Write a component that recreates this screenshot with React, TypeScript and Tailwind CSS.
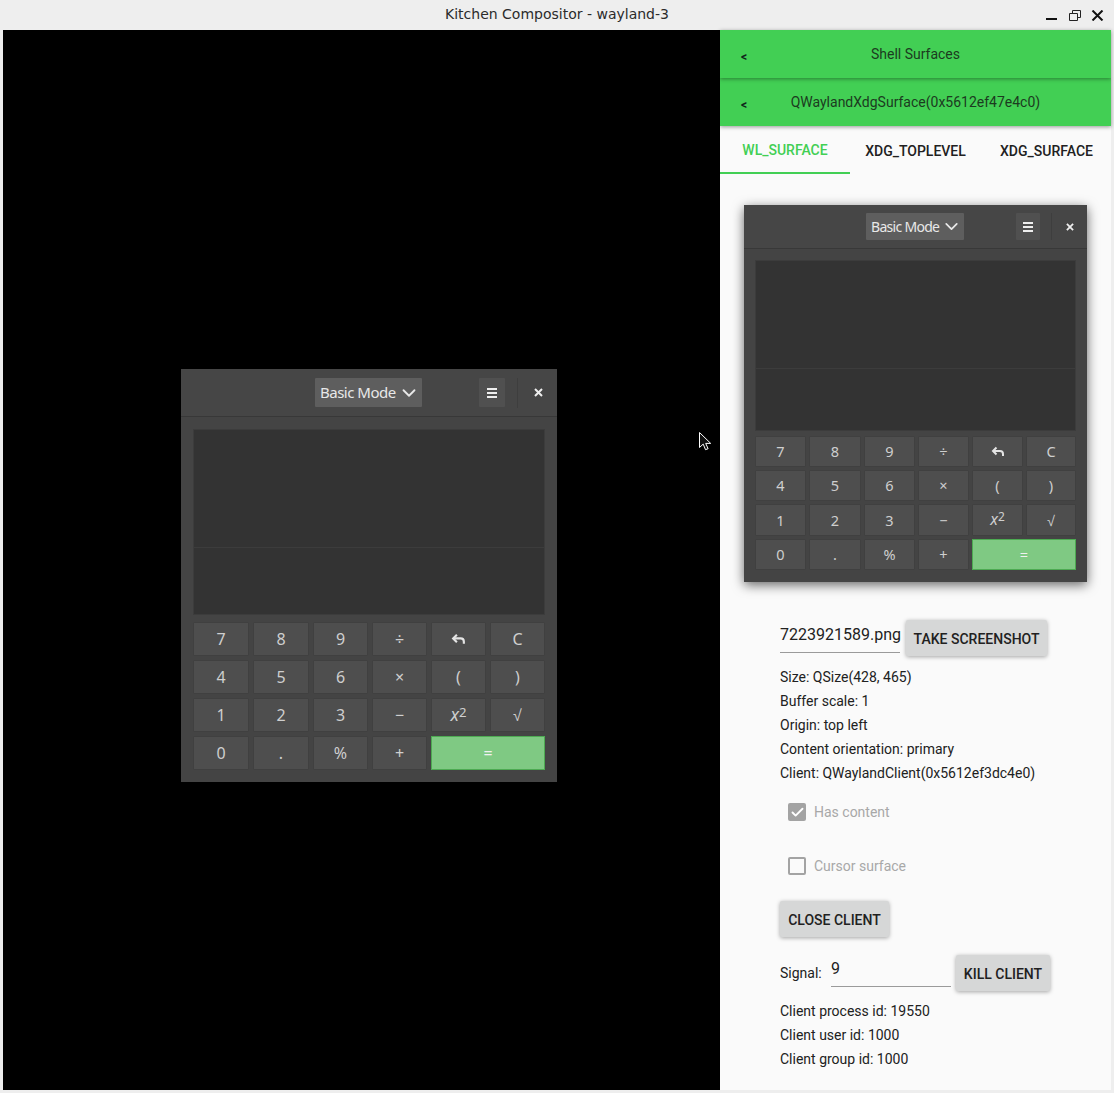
import type { ReactNode } from "react";
import { Check, ChevronDown } from "lucide-react";

type Size = {
  win: string; header: string; mode: string; modeText: string; menu: string; sep: string; close: string; closeIcon: number;
  body: string; display: string; top: string; grid: string; eq: string; chev: number; back: number;
};

const big: Size = {
  win: "w-[376px] h-[413px] rounded-t-[3px]",
  header: "h-[48px] pt-[9px] pl-[134px]",
  mode: "w-[107px] h-[29px] pl-[5px] gap-[2px]",
  modeText: "text-[15px] tracking-[-0.5px]",
  menu: "w-[26px] h-[29px] ml-[57px]",
  sep: "h-[30px] ml-[12px]",
  close: "ml-[16px] h-[29px]",
  closeIcon: 9,
  body: "pt-[12px] pl-[12px] pr-[12px]",
  display: "h-[186px]",
  top: "h-[118px]",
  grid: "mt-[7px] grid-cols-[56px_56px_55px_55px_55px_55px] grid-rows-[34px_34px_34px_34px] gap-[4px] text-[16px]",
  eq: "col-span-2",
  chev: 22,
  back: 15,
};

const small: Size = {
  win: "w-[343px] h-[377px] rounded-t-[2px] shadow-[0_3px_12px_rgba(0,0,0,0.6)]",
  header: "h-[44px] pt-[8px] pl-[122px]",
  mode: "w-[98px] h-[27px] pl-[5px] gap-[2px]",
  modeText: "text-[14px] tracking-[-0.7px]",
  menu: "w-[24px] h-[27px] ml-[52px]",
  sep: "h-[27px] ml-[11px]",
  close: "ml-[14px] h-[27px]",
  closeIcon: 8,
  body: "pt-[11px] pl-[11px] pr-[11px]",
  display: "h-[171px]",
  top: "h-[108px]",
  grid: "mt-[5px] grid-cols-[51px_52px_51px_51px_51px_50px] grid-rows-[31px_31px_32px_31px] gap-[3px] text-[14.5px]",
  eq: "col-span-2",
  chev: 21,
  back: 14,
};

function BackIcon({ size }: { size: number }) {
  return (
    <svg width={size} height={size} viewBox="0 0 14 14" fill="none" stroke="#e4e4e4" strokeWidth="2">
      <path d="M5.5 2.5 2 6l3.5 3.5" />
      <path d="M2.5 6H9c2 0 3 1.3 3 3v2" />
    </svg>
  );
}

function Calc({ s }: { s: Size }) {
  const keys: ReactNode[] = [
    "7", "8", "9", "÷", <BackIcon size={s.back} />, "C",
    "4", "5", "6", "×", "(", ")",
    "1", "2", "3", "−",
    <span className="italic text-[1.1em] leading-none">x<span className="not-italic text-[0.75em] leading-none relative -top-[0.35em]">2</span></span>,
    "√",
    "0", ".", "%", "+",
  ];
  return (
    <div className={`${s.win} bg-[#444444] shrink-0 font-['Noto_Sans',sans-serif] text-[#cfcfcf]`}>
      <div className={`${s.header} flex items-start border-b border-[#383838] bg-[#464646]`}>
        <div className={`${s.mode} bg-[#5e5e5e] rounded-[1px] flex items-center text-[#e8e8e8]`}>
          <span className={`${s.modeText} leading-none whitespace-nowrap`}>Basic Mode</span>
          <ChevronDown size={s.chev} strokeWidth={2} color="#e8e8e8" />
        </div>
        <div className={`${s.menu} bg-[#505050] rounded-[1px] flex flex-col items-center justify-center gap-[2px]`}>
          <div className="w-[10px] h-[2px] bg-[#eeeeee]" />
          <div className="w-[10px] h-[2px] bg-[#eeeeee]" />
          <div className="w-[10px] h-[2px] bg-[#eeeeee]" />
        </div>
        <div className={`${s.sep} w-px bg-[#3e3e3e]`} />
        <div className={`${s.close} flex items-center`}>
          <svg width={s.closeIcon} height={s.closeIcon} viewBox="0 0 9 9" stroke="#eeeeee" strokeWidth="2">
            <path d="M1 1l7 7M8 1 1 8" />
          </svg>
        </div>
      </div>
      <div className={s.body}>
        <div className={`${s.display} bg-[#333333] border border-[#3c3c3c] flex flex-col`}>
          <div className={`${s.top} border-b border-[#3c3c3c]`} />
        </div>
        <div className={`${s.grid} grid`}>
          {keys.map((k, i) => (
            <div key={i} className="bg-[#4e4e4e] border border-[#404040] rounded-[1px] flex items-center justify-center leading-none">
              {k}
            </div>
          ))}
          <div className={`${s.eq} bg-[#7fc983] border border-[#4daa52] flex items-center justify-center text-[#f0f0f0] leading-none`}>=</div>
        </div>
      </div>
    </div>
  );
}

function RaisedButton({ children, className }: { children: string; className: string }) {
  return (
    <div className={`${className} bg-[#d6d7d7] rounded-[2px] shadow-[0_1px_4px_rgba(0,0,0,0.35)] flex items-center justify-center pt-[2px] text-[14px] font-medium text-[#212121]`}>
      {children}
    </div>
  );
}

function AppBar({ title, h }: { title: string; h: string }) {
  return (
    <div className={`${h} bg-[#42cf54] shadow-[0_1px_4px_rgba(0,0,0,0.4)] flex items-center relative text-[14px] text-[#1c3b20]`}>
      <span className="w-[49px] pl-[21px] font-bold text-[12px] pt-[5px] text-[#10241a]">&lt;</span>
      <span className="w-[293px] text-center">{title}</span>
    </div>
  );
}

export default function App() {
  return (
    <div className="w-[1114px] h-[1093px] bg-[#eeeeee] flex flex-col overflow-hidden relative font-['Roboto',sans-serif]">
      <div className="h-[30px] shrink-0 flex items-center relative">
        <div className="w-full text-center text-[14px] text-[#2b2b2b] font-['DejaVu_Sans',sans-serif] pb-[2px]">Kitchen Compositor - wayland-3</div>
        <div className="absolute top-[9px] left-[1046px] flex items-start">
          <div className="w-[11px] h-[2px] bg-[#111111] mt-[9px]" />
          <svg width="12" height="11" viewBox="0 0 12 11" fill="none" stroke="#222222" className="ml-[12px] mt-[1px]">
            <path d="M.5 3.5h8v7h-8zM3.5 3V.5h8v7H9" />
          </svg>
          <svg width="13" height="11" viewBox="0 0 13 11" stroke="#111111" strokeWidth="2" className="ml-[10px] mt-[1px]">
            <path d="M1.5 .5l10 10M11.5 .5l-10 10" />
          </svg>
        </div>
      </div>

      <div className="flex h-[1060px] pl-[3px]">
        <div className="w-[717px] bg-black pl-[178px] pt-[339px] shrink-0">
          <Calc s={big} />
        </div>
        <div className="w-[391px] bg-[#fafafa] shrink-0 flex flex-col text-[14px] text-[#212121]">
          <AppBar title="Shell Surfaces" h="h-[48px] z-20" />
          <AppBar title="QWaylandXdgSurface(0x5612ef47e4c0)" h="h-[48px] z-10" />
          <div className="h-[48px] flex text-[14px] font-medium">
            <div className="w-[130px] h-[48px] border-b-2 border-[#42cf54] text-[#42cf54] flex items-center justify-center pt-[3px]">WL_SURFACE</div>
            <div className="w-[131px] flex items-center justify-center pt-[3px]">XDG_TOPLEVEL</div>
            <div className="w-[130px] flex items-center justify-center pt-[3px] pl-[1px]">XDG_SURFACE</div>
          </div>

          <div className="pl-[24px] pt-[31px]">
            <Calc s={small} />
          </div>

          <div className="pl-[60px] pt-[38px] flex flex-col">
            <div className="flex items-start h-[36px]">
              <div className="w-[120px] h-[33px] border-b border-[#9a9a9a] text-[16px] leading-[30px]">7223921589.png</div>
              <RaisedButton className="ml-[6px] w-[141px] h-[36px]">TAKE SCREENSHOT</RaisedButton>
            </div>
            <div className="mt-[9px] flex flex-col leading-[24px]">
              <div>Size: QSize(428, 465)</div>
              <div>Buffer scale: 1</div>
              <div>Origin: top left</div>
              <div>Content orientation: primary</div>
              <div>Client: QWaylandClient(0x5612ef3dc4e0)</div>
            </div>
            <div className="mt-[15px] ml-[8px] h-[24px] flex items-center text-[#a8a8a8]">
              <div className="w-[18px] h-[18px] rounded-[2px] bg-[#a3a3a3] flex items-center justify-center">
                <Check size={15} strokeWidth={3} color="#ffffff" />
              </div>
              <span className="ml-[8px]">Has content</span>
            </div>
            <div className="mt-[30px] ml-[8px] h-[24px] flex items-center text-[#a8a8a8]">
              <div className="w-[18px] h-[18px] rounded-[2px] border-2 border-[#a3a3a3]" />
              <span className="ml-[8px]">Cursor surface</span>
            </div>
            <RaisedButton className="mt-[23px] w-[109px] h-[36px]">CLOSE CLIENT</RaisedButton>
            <div className="mt-[18px] flex items-start h-[36px]">
              <span className="pt-[8px] w-[51px]">Signal:</span>
              <div className="w-[120px] h-[32px] border-b border-[#9a9a9a] text-[16px] leading-[28px]">9</div>
              <RaisedButton className="ml-[5px] w-[94px] h-[36px]">KILL CLIENT</RaisedButton>
            </div>
            <div className="mt-[8px] flex flex-col leading-[24px]">
              <div>Client process id: 19550</div>
              <div>Client user id: 1000</div>
              <div>Client group id: 1000</div>
            </div>
          </div>
        </div>
      </div>

      <svg width="13" height="20" viewBox="0 0 13 20" className="absolute left-[699px] top-[432px]">
        <path d="M.5 .5v15l3.7-3.4 2.3 5.6 2.6-1-2.4-5.3h5z" fill="#111111" stroke="#ffffff" />
      </svg>
    </div>
  );
}
